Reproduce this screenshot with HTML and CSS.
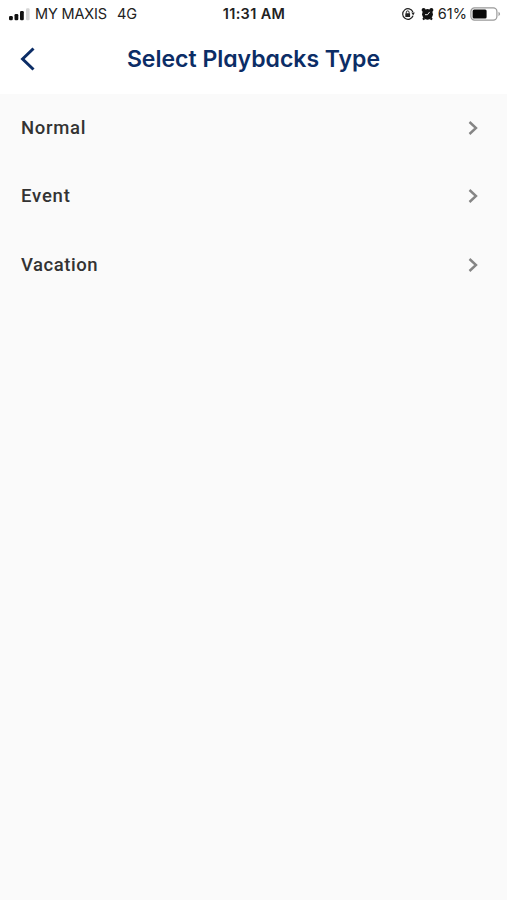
FILE: index.html
```html
<!DOCTYPE html>
<html lang="en">
<head>
<meta charset="utf-8">
<meta name="viewport" content="width=device-width, initial-scale=1">
<title>Select Playbacks Type</title>
<link rel="stylesheet" href="styles.css">
</head>
<body>
<header class="top">
  <div class="status">
    <div class="status-left">
      <svg class="signal" width="21" height="14" viewBox="0 0 21 14"><g fill="#111"><rect x="0" y="9" width="3.8" height="4.3" rx="1.2"/><rect x="5.5" y="7" width="3.8" height="6.3" rx="1.2"/><rect x="11" y="4" width="3.8" height="9.3" rx="1.2"/></g><rect x="17" y="1.3" width="3.6" height="12" rx="1.2" fill="#d5d5d5"/></svg>
      <span class="carrier">MY MAXIS</span>
      <span class="network">4G</span>
    </div>
    <span class="clock">11:31 AM</span>
    <div class="status-right">
      <svg class="lock" width="14" height="14" viewBox="0 0 14 14"><path d="M11.9 5A5.3 5.3 0 1 0 12 8.8" fill="none" stroke="#222" stroke-width="1.2"/><path d="M10.3 5.6h3.5L12.2 8.4z" fill="#222"/><rect x="4.3" y="6.3" width="4.8" height="3.8" rx=".5" fill="#222"/><path d="M5.3 6.5V5.3a1.4 1.4 0 0 1 2.8 0v1.2" fill="none" stroke="#222"/></svg>
      <svg class="alarm" width="13" height="14" viewBox="0 0 13 14"><g fill="#111"><circle cx="6.5" cy="7.3" r="5.4"/><circle cx="2.6" cy="2.9" r="2"/><circle cx="10.4" cy="2.9" r="2"/><path d="M2.2 10l2 2-1.5 1.3-1.3-1.2zM10.8 10l-2 2 1.5 1.3 1.3-1.2z"/></g><path d="M8.7 4.9L6.5 7.7H4" fill="none" stroke="#fff" stroke-width=".9"/></svg>
      <span class="percent">61%</span>
      <svg class="battery" width="31" height="14" viewBox="0 0 31 14"><rect x=".9" y=".9" width="26" height="12.2" rx="3.6" fill="#fff" stroke="#999" stroke-width="1.2"/><rect x="2.6" y="2.5" width="14" height="9" rx="1.5" fill="#080808"/><path d="M28.5 4.8q3.2 2.2 0 4.4z" fill="#999"/></svg>
    </div>
  </div>
  <div class="nav">
    <svg class="back" width="16" height="24" viewBox="0 0 16 24"><path d="M13.5 1.5L2.6 12l10.9 10.5" fill="none" stroke="#0c2d66" stroke-width="3"/></svg>
    <h1 class="title">Select Playbacks Type</h1>
  </div>
</header>
<main class="list">
  <div class="row"><span class="normal">Normal</span><svg width="12" height="16" viewBox="0 0 12 16"><path d="M1.5 2l6.5 6-6.5 6" fill="none" stroke="#858585" stroke-width="2.4"/></svg></div>
  <div class="row"><span class="event">Event</span><svg width="12" height="16" viewBox="0 0 12 16"><path d="M1.5 2l6.5 6-6.5 6" fill="none" stroke="#858585" stroke-width="2.4"/></svg></div>
  <div class="row"><span class="vacation">Vacation</span><svg width="12" height="16" viewBox="0 0 12 16"><path d="M1.5 2l6.5 6-6.5 6" fill="none" stroke="#858585" stroke-width="2.4"/></svg></div>
</main>
</body>
</html>
```
FILE: styles.css
```css
* { box-sizing: border-box; }
body { margin: 0; min-height: 100vh; background: #fafafa; font-family: Inter, sans-serif; }
svg { display: block; flex: none; }
.top { height: 94px; background: #fff; }
.status {
  display: grid; grid-template-columns: 1fr auto 1fr; align-items: center;
  height: 27px; padding: 0 6px 0 9px; font-size: 14.5px; line-height: 27px; color: #222;
}
.status-left, .status-right { display: flex; align-items: center; white-space: nowrap; }
.status-right { justify-content: flex-end; }
.carrier { margin-left: 5px; letter-spacing: -.15px; }
.network { margin-left: 10px; letter-spacing: -.1px; }
.clock { margin-right: 2px; font-weight: 600; letter-spacing: .35px; }
.alarm { margin-left: 6px; }
.percent { margin: 0 3px 0 4px; }
.nav { display: grid; grid-template-columns: 40px 1fr 40px; align-items: center; height: 64px; padding: 0 20px; }
.title { margin: 0; text-align: center; white-space: nowrap; font-size: 23px; line-height: 30px; font-weight: 600; color: #0c2d66; font-feature-settings: "cv11"; }
.row {
  display: flex; align-items: center; justify-content: space-between;
  height: 68.3px; padding: 0 27px 0 21px;
  font: 500 18.5px/28px Roboto, sans-serif; letter-spacing: .55px; color: #333;
}
.event { letter-spacing: .8px; }
.normal { letter-spacing: .7px; }
```
